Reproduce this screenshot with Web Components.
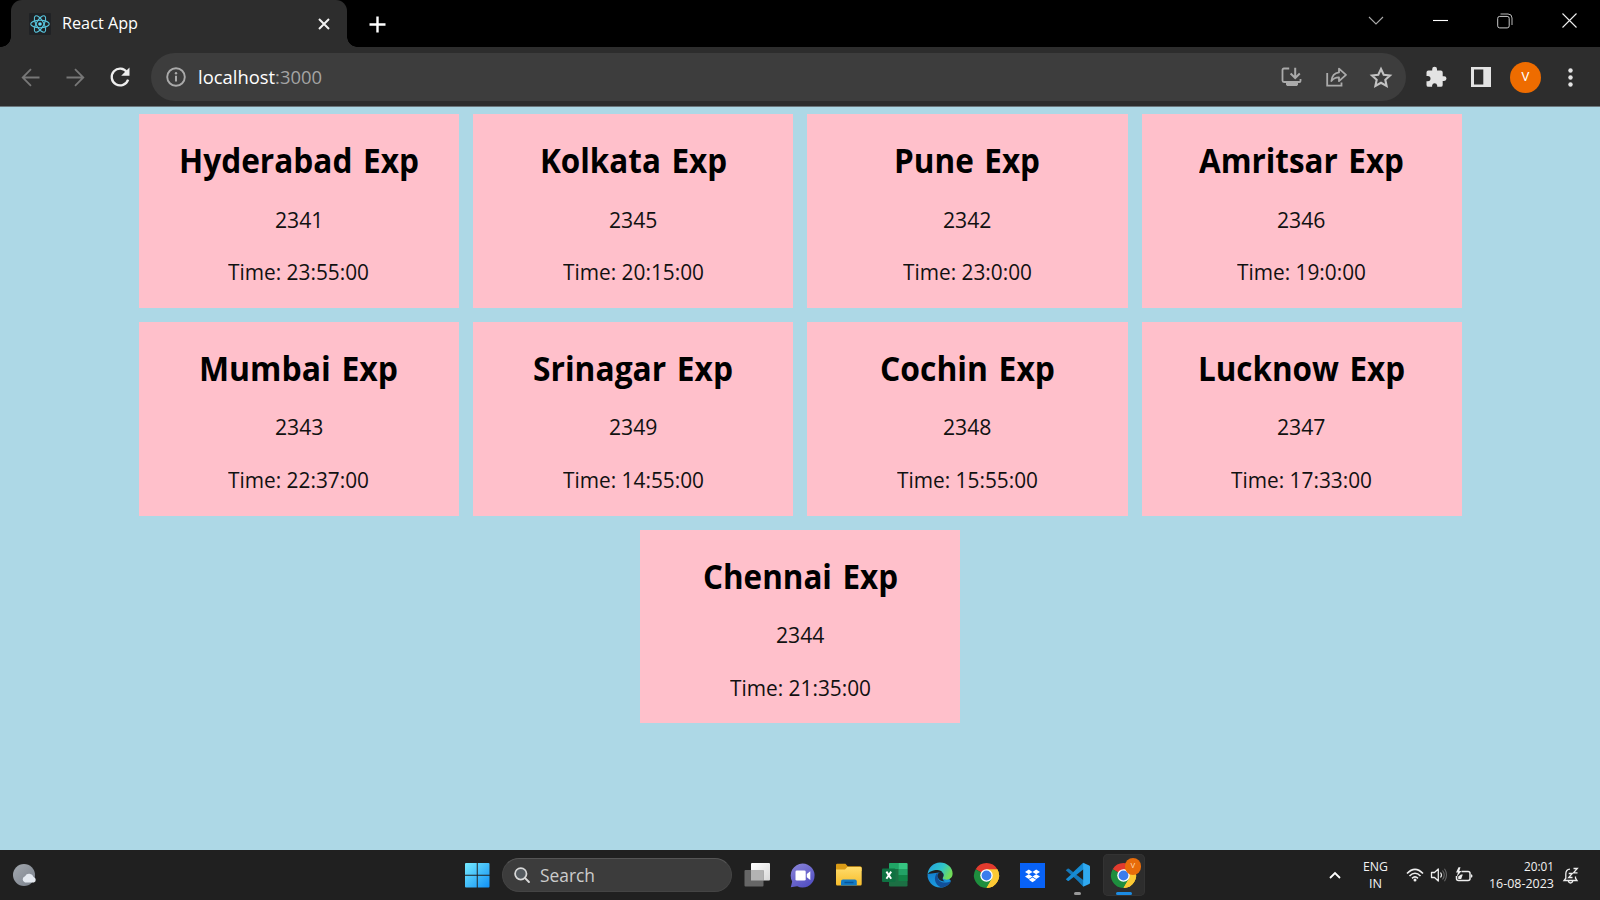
<!DOCTYPE html>
<html lang="en">
<head>
<meta charset="utf-8">
<title>React App</title>
<style>
html,body{margin:0;height:100%;overflow:hidden;background:#000}
body{font-family:"Open Sans","Noto Sans",sans-serif;color:#fff}
</style>
</head>
<body>
<desktop-screen></desktop-screen>
<script>
const define=(name,html,setup)=>{
  const t=document.createElement('template');t.innerHTML=html;
  customElements.define(name,class extends HTMLElement{
    connectedCallback(){
      if(this.shadowRoot)return;
      this.attachShadow({mode:'open'}).append(t.content.cloneNode(true));
      if(setup)setup(this,this.shadowRoot);
    }
  });
};

/* Single line of text set to a given advance width. */
define('fit-text',`<style>:host{display:inline-block;white-space:nowrap;text-align:left}span{display:inline-block;transform-origin:0 50%}</style><span><slot></slot></span>`,(el,root)=>{
  const w=+el.getAttribute('w'),s=root.querySelector('span');
  el.style.width=w+'px';
  const fit=()=>{s.style.transform='none';const n=s.getBoundingClientRect().width;if(n)s.style.transform=`scaleX(${w/n})`};
  queueMicrotask(fit);requestAnimationFrame(fit);
});

const chrome=`<path d="M12 12 1.6 6A12 12 0 0 1 22.4 6z" fill="#e33b2e"/><path d="M12 12 22.4 6A12 12 0 0 1 12 24z" fill="#fcc934"/><path d="M22.4 6H12v6z" fill="#e33b2e"/><path d="M1.6 6A12 12 0 0 0 12 24l5.2-9L12 12z" fill="#1e8e3e"/><path d="M22.4 6H12l5.2 9L12 24A12 12 0 0 0 22.4 6z" fill="#fcc934"/><circle cx="12" cy="12" r="6" fill="#fff"/><circle cx="12" cy="12" r="4.7" fill="#3b7ded"/>`;
const ICONS={
 react:[22,22,`<rect width="22" height="22" rx="1" fill="#202225"/><g fill="none" stroke="#58c4dc" stroke-width="1.1"><ellipse cx="11" cy="11" rx="9.3" ry="3.7"/><ellipse cx="11" cy="11" rx="9.3" ry="3.7" transform="rotate(60 11 11)"/><ellipse cx="11" cy="11" rx="9.3" ry="3.7" transform="rotate(120 11 11)"/></g><circle cx="11" cy="11" r="1.8" fill="#61dafb"/>`],
 close:[12,12,`<path d="M1 1 11 11M11 1 1 11" stroke="#f2f2f2" stroke-width="2"/>`],
 plus:[17,17,`<path d="M8.5.5v16M.5 8.5h16" stroke="#fff" stroke-width="2.4"/>`],
 down:[16,9,`<path d="M1 1 8 8 15 1" fill="none" stroke="#aaa" stroke-width="1.1"/>`],
 min:[15,15,`<path d="M0 7.5h15" stroke="#fff" stroke-width="1.1"/>`],
 restore:[16,16,`<rect x=".7" y="3.4" width="11.5" height="11.5" rx="2" fill="none" stroke="#ccc"/><path d="M3.5 1h7.5a4 4 0 0 1 4 4v7" fill="none" stroke="#bbb"/>`],
 winx:[15,15,`<path d="M.5.5l14 14M14.5.5l-14 14" stroke="#eee" stroke-width="1.1"/>`],
 back:[19,19,`<path d="M18.5 9.5H2M10 1.2 1.7 9.5 10 17.8" fill="none" stroke="#777" stroke-width="1.8"/>`],
 fwd:[19,19,`<path d="M.5 9.5H17M9 1.2 17.3 9.5 9 17.8" fill="none" stroke="#777" stroke-width="1.8"/>`],
 reload:[20,20,`<path d="M17 5.2A8.4 8.4 0 1 0 18.1 12.6" fill="none" stroke="#eee" stroke-width="2.3"/><path d="M19.5.5v8.3h-8.3z" fill="#eee"/>`],
 info:[20,20,`<circle cx="10" cy="10" r="8.8" fill="none" stroke="#aaa" stroke-width="1.9"/><path d="M10 8.8v5.7" stroke="#aaa" stroke-width="2"/><circle cx="10" cy="6.2" r="1.2" fill="#aaa"/>`],
 install:[21,20,`<path d="M8.2 1.5H3Q1.500 1.500 1.500 3v10.500Q1.500 15 3 15h15.500q1 0 1-1v-2" fill="none" stroke="#aaa" stroke-width="1.800"/><path d="M5 15h12v2.500l-1 1.500H6l-1-1.500z" fill="#aaa"/><path d="M14.200.8v9M9.600 6.500l4.600 4.500 4.600-4.500" fill="none" stroke="#aaa" stroke-width="2"/>`],
 share:[22,20,`<path d="M1.200 6v12.700H15.500v-3.200" fill="none" stroke="#aaa" stroke-width="1.800"/><path d="M13 1.600v3.800Q6.200 6.300 5.400 14 8.500 10.200 13 10.400v3.800l7-6.300z" fill="none" stroke="#aaa" stroke-width="1.800" stroke-linejoin="round"/>`],
 star:[22,21,`<path d="m11 2 2.700 5.800 6.300.7-4.700 4.300 1.300 6.200L11 15.800 5.400 19l1.300-6.200L2 8.500l6.300-.7z" fill="none" stroke="#c2c2c2" stroke-width="2.100"/>`],
 puzzle:[22,22,`<path d="M19.1 10.2h-1.4V6.4q0-1.9-1.9-1.9H12V3.1a2.4 2.4 0 0 0-4.8 0v1.4H3.4q-1.9 0-1.9 1.9V10h1.4a2.6 2.6 0 0 1 0 5.2H1.5v3.7q0 1.9 1.9 1.9h3.7v-1.4a2.6 2.6 0 0 1 5.1 0v1.4h3.6q1.9 0 1.9-1.9V15h1.4a2.4 2.4 0 0 0 0-4.8z" fill="#e3e3e3"/>`],
 panel:[20,20,`<path d="M0 0h20v20H0zM3 2.6v14.8h9.3V2.6z" fill="#e3e3e3" fill-rule="evenodd"/>`],
 dots:[5,19,`<circle cx="2.5" cy="2.5" r="2.2" fill="#e3e3e3"/><circle cx="2.5" cy="9.5" r="2.2" fill="#e3e3e3"/><circle cx="2.5" cy="16.5" r="2.2" fill="#e3e3e3"/>`],
 weather:[26,24,`<defs><linearGradient id="g" x2="1" y2="1"><stop stop-color="#a3a8af"/><stop offset="1" stop-color="#7b828c"/></linearGradient></defs><circle cx="12" cy="12" r="11" fill="url(#g)"/><path d="M13 19.500a3.300 3.300 0 0 1 0-6.300 4.700 4.700 0 0 1 8.600.8 2.900 2.900 0 0 1 .3 5.500z" fill="#e4e9f0"/>`],
 start:[25,25,`<defs><linearGradient id="g" gradientUnits="userSpaceOnUse" x1="0" y1="0" x2="25" y2="25"><stop stop-color="#75eaff"/><stop offset="1" stop-color="#1090f5"/></linearGradient></defs><path d="M1 0h11v12H0V1Q0 0 1 0zM13 0h11q1 0 1 1v11H13zM0 13h12v12H1q-1 0-1-1zM13 13h12v11q0 1-1 1H13z" fill="url(#g)"/>`],
 search:[17,17,`<circle cx="7" cy="7" r="5.9" fill="#555b60" stroke="#d8d8d8" stroke-width="1.8"/><path d="m11.2 11.2 4.2 4.3" stroke="#d8d8d8" stroke-width="2" stroke-linecap="round"/>`],
 tasks:[26,24,`<defs><linearGradient id="g" x2="1" y2="1"><stop stop-color="#fff"/><stop offset="1" stop-color="#d8d8d8"/></linearGradient></defs><rect x="7" y="0" width="19" height="17.5" rx="1" fill="url(#g)"/><rect x=".5" y="7" width="19" height="16.5" rx="1" fill="#666"/><path d="M7 7h12.5v10.5H7z" fill="#b3b3b3"/>`],
 chat:[25,25,`<defs><linearGradient id="g" x2=".6" y2="1"><stop stop-color="#8c86d8"/><stop offset="1" stop-color="#5451c4"/></linearGradient></defs><path d="M12.5.5a12 12 0 1 1-5.3 22.7L.8 24.2l1.4-5.8A12 12 0 0 1 12.5.5z" fill="url(#g)"/><rect x="5.5" y="7.5" width="10.2" height="10" rx="1.3" fill="#fff"/><path d="M16.8 11 20.3 8.2v8.8L16.8 14.2z" fill="#fff"/>`],
 folder:[26,24,`<defs><linearGradient id="g" x2="0" y2="1"><stop stop-color="#ffdc6b"/><stop offset="1" stop-color="#f7bd2c"/></linearGradient></defs><path d="M0 2Q0 .8 1.2.8h8.3l2.2 2.5H24q1.7 0 1.700 1.500V8H0z" fill="#d99b16"/><path d="M0 6.500h9l2.400-2.400H24.400q1.300 0 1.300 1.200V21q0 1.500-1.300 1.500H1.300Q0 22.500 0 21z" fill="url(#g)"/><path d="M5 22.500v-4q0-2 2-2h11.800q2 0 2 2v4z" fill="#137bc5"/><path d="M8.500 19.500h9" stroke="#075497" stroke-width="1.500"/>`],
 excel:[26,24,`<rect x="7" y="0" width="18.500" height="23.500" rx="1.300" fill="#1c7044"/><path d="M8 0h8.500v6H7V1q0-1 1-1z" fill="#20a465"/><path d="M16.500 0h8q1 0 1 1v5h-9z" fill="#36c481"/><path d="M16.500 6h9v6h-9z" fill="#22a366"/><path d="M16.500 12h9v6h-9z" fill="#118447"/><rect y="5.500" width="13.500" height="13.500" rx="1" fill="#0f7142"/><path d="m4.400 8.600 4.800 7.200M9.200 8.600l-4.800 7.200" stroke="#fff" stroke-width="1.900"/>`],
 edge:[26,26,`<defs><linearGradient id="g" x2="1" y2=".45"><stop stop-color="#249ee5"/><stop offset=".6" stop-color="#2fc5c9"/><stop offset="1" stop-color="#71dc59"/></linearGradient><linearGradient id="h" x2="0" y2="1"><stop stop-color="#127fce"/><stop offset="1" stop-color="#1c9de0"/></linearGradient></defs><path d="M.6 12A12.600 12.600 0 0 0 13 25.600c5 0 8.800-2.500 11-6.600L16 10z" fill="url(#h)"/><path d="M.6 12.500C1 5.500 6.500.4 13 .4 20 .4 25.600 5.300 25.600 11.500c0 4-2.800 6.200-6 6.200-3 0-4.500-1.200-3.600-2.400C18 12 15 7.900 10.500 7.900 5.800 7.900 2 9.500.6 12.500z" fill="url(#g)"/><path d="M10.500 10.500C6 15 7.500 23 14.300 25.500 19 25 22.600 22.500 24 19c-5.500 3.300-13.500 1.500-13.500-5z" fill="#124f99"/><path d="M16 15.300c1.300-1.800.7-4.300-1.500-5.300-2.300-.5-4 1.500-4 3.800 0 3.500 3.300 5.700 7.100 5.700-1.700-1-2.500-2.800-1.600-4.200z" fill="#1e2632"/>`],
 chrome:[24,24,chrome],
 dropbox:[25,25,`<path d="M0 0h25v25H0z" fill="#0862f6"/><path d="m8.800 6.500 3.700 2.400-3.700 2.400L5 8.900zm7.400 0L20 8.900l-3.800 2.400-3.700-2.400zM5 13.600l3.800-2.300 3.700 2.300L8.800 16zm11.200-2.300 3.800 2.300-3.800 2.400-3.700-2.400zM8.800 16.800l3.700-2.400 3.700 2.400-3.700 2.400z" fill="#fff"/>`],
 code:[26,26,`<path d="M18.500.8 6.500 12l12 13V19L10.500 12.800 18.500 7z" fill="#1385c9"/><path d="M.8 8.300 2.600 6.900q.7-.5 1.400 0L19.500 19v5.800z" fill="#1477b8"/><path d="M.8 17.500 2.600 19q.7.500 1.400 0L19.500 7V1z" fill="#168bd3"/><path d="M18.500.8 24.700 3.500q.8.400.8 1.300v16.400q0 .9-.8 1.300L18.500 25.200z" fill="#2fa9f0"/>`],
 up:[12,8,`<path d="M1 7 6 2l5 5" fill="none" stroke="#fff" stroke-width="1.800"/>`],
 wifi:[18,14,`<g fill="none" stroke="#eee" stroke-width="1.600"><path d="M1 5.500Q9-2.800 17 5.500"/><path d="M3.500 8Q9 2.500 14.500 8"/><path d="M6 10.300Q9 7.500 12 10.300"/></g><circle cx="9" cy="12" r="1.500" fill="#eee"/>`],
 sound:[18,16,`<path d="M1.500 5.500h3L8.300 2v12L4.500 10.500h-3z" fill="none" stroke="#eee" stroke-width="1.300" stroke-linejoin="round"/><path d="M10.500 5.500q2 2.500 0 5" fill="none" stroke="#eee" stroke-width="1.200"/><path d="M12.500 3.500q3.500 4.500 0 9M14.500 1.800q4 6.200 0 12.400" fill="none" stroke="#666" stroke-width="1.100"/>`],
 battery:[18,16,`<path d="M6.500 4.500H13q2 0 2 2v5q0 2-2 2H3.500q-2 0-2-2V9" fill="none" stroke="#eee" stroke-width="1.500"/><path d="M16 7.200q1.500.2 1.500 1.800T16 10.800z" fill="#eee"/><path d="M3.500.2 1 5.500h2L1.500 10 6.500 4H4.300L5.500.2zM3.200 12v-2.500L6 7.500h1.800L6.200 12z" fill="#eee"/>`],
 bell:[16,17,`<path d="M7 2.200Q2.800 2.500 2.800 7v4.200L1 13.500h13l-1.500-2.300V9.500M5.300 14q.5 2 2.200 2t2.300-2" fill="none" stroke="#eee" stroke-width="1.300"/><path d="M5.700 6.500h3.600l-3.600 4h3.800M10.500 1.500h3.800l-3.800 4.300h4" fill="none" stroke="#eee" stroke-width="1.300"/>`]
};
define('ui-icon',`<style>:host{display:block;flex:none}svg{display:block;overflow:visible}</style>`,(el,root)=>{
  const [w,h,body]=ICONS[el.getAttribute('name')];
  const size=+el.getAttribute('size')||w;
  root.innerHTML+=`<svg width="${size}" height="${size*h/w}" viewBox="0 0 ${w} ${h}">${body}</svg>`;
});

define('tab-strip',`<style>
:host{display:flex;height:47px;background:#000;align-items:flex-start}
.tab{position:relative;margin-left:11px;width:335.500px;height:47px;box-sizing:border-box;background:#2d2d2d;border-radius:11px 11px 0 0;display:flex;align-items:center;padding:0 16.500px 0 17.500px}
.tab:before,.tab:after{content:"";position:absolute;bottom:0;width:10px;height:10px}
.tab:before{left:-10px;background:radial-gradient(circle at 0 0,#0000 9.500px,#2d2d2d 10px)}
.tab:after{right:-10px;background:radial-gradient(circle at 100% 0,#0000 9.500px,#2d2d2d 10px)}
.t{font-size:16px;line-height:22px;margin:-1px 0 0 11px;flex:1}
.plus{margin:15.500px 0 0 22px}
.win{margin-left:auto;display:flex;align-items:center;height:41px;padding-right:24px}
.win>*+*{margin-left:49px}
</style><div class="tab"><ui-icon name="react"></ui-icon><div class="t"><fit-text w="76">React App</fit-text></div><ui-icon name="close"></ui-icon></div><ui-icon class="plus" name="plus"></ui-icon>
<div class="win"><ui-icon name="down"></ui-icon><ui-icon name="min"></ui-icon><ui-icon name="restore"></ui-icon><ui-icon name="winx"></ui-icon></div>`);

define('tool-bar',`<style>
:host{display:flex;height:60px;box-sizing:border-box;background:#2d2d2d;align-items:center;padding:1px 27.500px 0 21px;border-bottom:1px solid #6b777d}
.box{width:1255px;height:47.500px;margin-left:21px;border-radius:24px;background:#3d3d3d;box-sizing:border-box;display:flex;align-items:center;padding:0 14.500px 0 15px}
.box .u{font-size:19px;line-height:26px;margin:0 auto 0 11.500px}
.box .u i{font-style:normal;color:#a4a4a4}
.av{width:31px;height:31px;border-radius:50%;background:#ee6c00;display:grid;place-items:center;font:13px/16px Roboto,sans-serif;margin:0 27px 0 19px}
</style><ui-icon name="back"></ui-icon><ui-icon name="fwd" style="margin:0 25px 0 26px"></ui-icon><ui-icon name="reload"></ui-icon>
<div class="box"><ui-icon name="info"></ui-icon><div class="u"><fit-text w="124">localhost<i>:3000</i></fit-text></div><ui-icon name="install"></ui-icon><ui-icon name="share" style="margin:0 22px 0 24px"></ui-icon><ui-icon name="star"></ui-icon></div>
<ui-icon name="puzzle" style="margin:0 24px 0 19px"></ui-icon><ui-icon name="panel"></ui-icon><div class="av">V</div><ui-icon name="dots"></ui-icon>`);

define('train-card',`<style>
:host{display:flex;flex-direction:column;align-items:center;width:320.300px;height:193.700px;background:#ffc0cb;color:#000;text-align:center}
h1{font:700 33.500px/46px "Open Sans",sans-serif;word-spacing:2.500px;margin:23px 0 0}
p{font:400 22.500px/30px "Open Sans",sans-serif;color:#111;margin:0}
.n{margin-top:21.500px}.d{margin-top:22.300px}
</style><h1></h1><p class="n"></p><p class="d"></p>`,(el,root)=>{
  const g=n=>el.getAttribute(n),put=(s,w,t)=>root.querySelector(s).innerHTML=`<fit-text w="${w}">${t}</fit-text>`;
  put('h1',+g('w')+3,g('name'));put('.n',48.5,g('number'));put('.d',g('time').length>7?141:129,'Time: '+g('time'));
});

define('train-board',`<style>
:host{display:flex;flex-wrap:wrap;justify-content:center;align-content:flex-start;gap:14.200px 14px;background:#add8e6;height:743px;box-sizing:border-box;padding:7px 130.500px 0 130.500px}
</style>`,(el,root)=>{
  root.innerHTML+=[['Hyderabad',2341,'23:55:00',237],['Kolkata',2345,'20:15:00',184],['Pune',2342,'23:0:00',143],['Amritsar',2346,'19:0:00',202],['Mumbai',2343,'22:37:00',196],['Srinagar',2349,'14:55:00',197],['Cochin',2348,'15:55:00',172],['Lucknow',2347,'17:33:00',204],['Chennai',2344,'21:35:00',192]]
  .map(([n,k,t,w])=>`<train-card name="${n} Exp" number="${k}" time="${t}" w="${w}"></train-card>`).join('');
});

define('task-bar',`<style>
:host{display:flex;height:50px;background:#202020;align-items:center}
.s{width:230px;height:34px;box-sizing:border-box;border:1px solid #444;border-top-color:#555;border-radius:17px;background:#3c3c3c;margin-left:12.500px;display:flex;align-items:center;padding-left:11.500px;color:#ccc;font-size:18px;line-height:26px}
.s fit-text{margin:0 0 0 9.500px}
.apps{display:flex;margin-left:4.500px}
.a{position:relative;width:42px;height:42px;margin-right:3.850px;display:grid;place-items:center;border-radius:5px}
.on{background:#2d2d2d;box-shadow:inset 0 0 0 1px #333;margin:0}
.a.run:after,.on:after{content:"";position:absolute;bottom:1px;left:17.500px;width:7px;height:3px;border-radius:2px;background:#999}
.a.on:after{left:13px;width:16px;background:#1c8ce3}
.b{position:absolute;left:22px;top:4px;width:16.500px;height:16.500px;border-radius:50%;background:#e86c0a;font:7.500px/16.500px Roboto,sans-serif;text-align:center;color:#ffd9b5}
.tray{display:flex;align-items:center;margin-left:auto;padding-right:21.500px;font-size:13.500px;line-height:17px;color:#f2f2f2}
.l{text-align:center;margin:0 18px 0 21.500px;width:25px}.c{text-align:right;margin:0 9px 0 16px}
</style><ui-icon name="weather" style="margin-left:12px"></ui-icon><ui-icon name="start" size="24.500" style="margin-left:426.500px"></ui-icon>
<div class="s"><ui-icon name="search" size="16.500"></ui-icon><fit-text w="55">Search</fit-text></div>
<div class="apps">
<div class="a"><ui-icon name="tasks"></ui-icon></div><div class="a"><ui-icon name="chat"></ui-icon></div><div class="a"><ui-icon name="folder"></ui-icon></div><div class="a"><ui-icon name="excel"></ui-icon></div><div class="a"><ui-icon name="edge"></ui-icon></div><div class="a"><ui-icon name="chrome" size="25"></ui-icon></div><div class="a"><ui-icon name="dropbox"></ui-icon></div><div class="a run"><ui-icon name="code" size="25.500"></ui-icon></div><div class="a on"><ui-icon name="chrome" size="25"></ui-icon><div class="b">V</div></div></div>
<div class="tray"><ui-icon name="up"></ui-icon><div class="l"><fit-text w="25">ENG</fit-text><br><fit-text w="13">IN</fit-text></div><ui-icon name="wifi"></ui-icon><ui-icon name="sound" style="margin:0 7.500px 0 6px"></ui-icon><ui-icon name="battery"></ui-icon><div class="c"><fit-text w="30">20:01</fit-text><br><fit-text w="65">16-08-2023</fit-text></div><ui-icon name="bell"></ui-icon></div>`);

define('desktop-screen',`<style>:host{display:grid;grid-template-rows:47px 60px 743px 50px;width:1600px;height:900px}</style><tab-strip></tab-strip><tool-bar></tool-bar><train-board></train-board><task-bar></task-bar>`);
</script>
</body>
</html>
